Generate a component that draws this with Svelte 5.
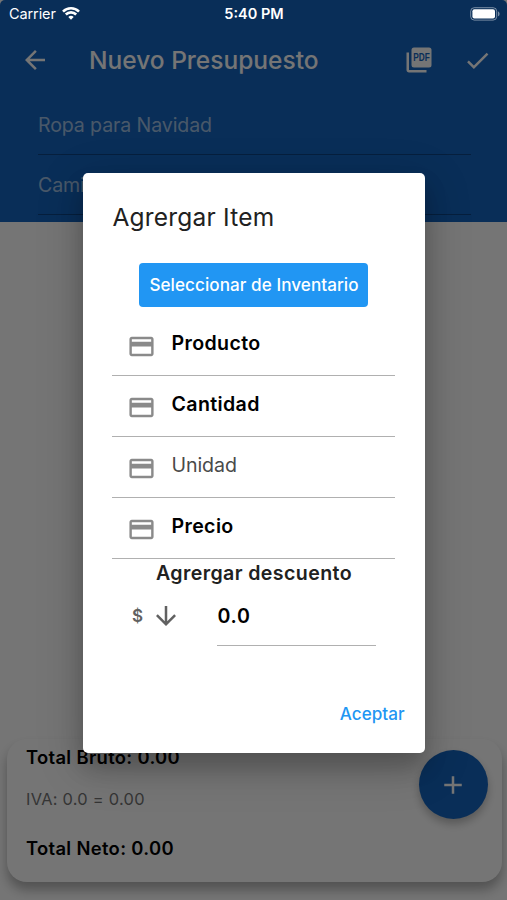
<script>
  let fields = [
    { label: 'Producto', required: true },
    { label: 'Cantidad', required: true },
    { label: 'Unidad', required: false },
    { label: 'Precio', required: true }
  ];
  let discount = '0.0';
</script>

<div class="screen">
  <div class="page">
    <header>
      <div class="toolbar">
        <svg class="back" viewBox="0 0 24 24"><path d="M20 11H7.83l5.59-5.59L12 4l-8 8 8 8 1.41-1.41L7.83 13H20v-2z" /></svg>
        <h1>Nuevo Presupuesto</h1>
        <svg class="pdf" viewBox="0 0 24 24">
          <path d="M4 6H2v14c0 1.1.9 2 2 2h14v-2H4z" />
          <rect x="6" y="2" width="16" height="16" rx="2" />
          <text x="7.4" y="12.6" textLength="13.2" lengthAdjust="spacingAndGlyphs">PDF</text>
        </svg>
        <svg class="check" viewBox="0 0 24 24"><path d="M9 16.17L4.83 12l-1.42 1.41L9 19 21 7l-1.41-1.41z" /></svg>
      </div>
      <div class="line">Ropa para Navidad</div>
      <div class="line">Camisas</div>
    </header>

    <section class="totals">
      <div class="sums">
        <b class="gross">Total Bruto: 0.00</b>
        <span class="tax">IVA: 0.0 = 0.00</span>
        <b class="net">Total Neto: 0.00</b>
      </div>
      <button class="fab" aria-label="Agregar">
        <svg viewBox="0 0 24 24"><path d="M19 13h-6v6h-2v-6H5v-2h6V5h2v6h6v2z" /></svg>
      </button>
    </section>
  </div>

  <div class="backdrop">
    <div class="dialog">
      <h2>Agrergar Item</h2>
      <button class="inventory">Seleccionar de Inventario</button>
      {#each fields as field}
        <div class="field">
          <svg viewBox="0 0 24 24"><path d="M20 4H4c-1.11 0-1.99.89-1.99 2L2 18c0 1.11.89 2 2 2h16c1.11 0 2-.89 2-2V6c0-1.11-.89-2-2-2zm0 14H4v-6h16v6zm0-10H4V6h16v2z" /></svg>
          <span class:required={field.required}>{field.label}</span>
        </div>
      {/each}
      <h3>Agrergar descuento</h3>
      <div class="discount">
        <span class="currency">$</span>
        <svg viewBox="0 0 24 24"><path d="M20 12l-1.41-1.41L13 16.17V4h-2v12.17l-5.58-5.59L4 12l8 8 8-8z" /></svg>
        <div class="amount">{discount}</div>
      </div>
      <button class="accept">Aceptar</button>
    </div>
  </div>

  <div class="status">
    <div class="carrier">
      <span>Carrier</span>
      <svg viewBox="0 0 18 13">
        <path d="M9 12.8 6.3 10a3.9 3.9 0 0 1 5.4 0z" />
        <path class="arc" d="M3.8 7.5a7.4 7.4 0 0 1 10.4 0M1 4.6a11.4 11.4 0 0 1 16 0" />
      </svg>
    </div>
    <div class="time">5:40 PM</div>
    <svg class="battery" viewBox="0 0 30 14">
      <rect class="outline" x=".7" y=".7" width="26" height="12.4" rx="3.6" />
      <rect x="2.4" y="2.2" width="22.6" height="9.4" rx="2" />
      <path class="tip" d="M28 4.6c2.1.7 2.1 3.9 0 4.6z" />
    </svg>
  </div>
</div>

<style>
  :global(body) {
    margin: 0;
    overflow: hidden;
  }

  .screen {
    position: relative;
    width: 507px;
    height: 900px;
    overflow: hidden;
    font-family: Inter, 'Liberation Sans', sans-serif;
  }

  h1, h2, h3 {
    margin: 0;
  }

  button {
    padding: 0;
    border: 0;
    font-family: inherit;
  }

  svg {
    display: block;
    flex: none;
    fill: currentColor;
  }

  .page {
    display: flex;
    flex-direction: column;
    justify-content: space-between;
    height: 900px;
    background: #fff;
  }

  header {
    box-sizing: border-box;
    height: 222px;
    padding-top: 25px;
    border-radius: 5px 5px 0 0;
    background: #1565c0;
    color: #fff;
  }

  .toolbar {
    display: flex;
    align-items: center;
    height: 70px;
    padding: 0 15px 0 20px;
  }

  .back {
    width: 30px;
    height: 30px;
  }

  h1 {
    flex: 1;
    margin-left: 39px;
    font-size: 24.5px;
    font-weight: 500;
    line-height: 30px;
    white-space: nowrap;
  }

  .pdf {
    width: 30px;
    height: 30px;
    margin-right: 29px;
  }

  .pdf text {
    fill: #1565c0;
    font-family: 'Liberation Sans', sans-serif;
    font-size: 8px;
    font-weight: 700;
  }

  .check {
    width: 29px;
    height: 29px;
  }

  .line {
    box-sizing: border-box;
    width: 433px;
    height: 60px;
    margin-left: 38px;
    border-bottom: 1px solid #0f4585;
    color: rgba(255, 255, 255, 0.6);
    font-size: 19.6px;
    letter-spacing: -0.13px;
    line-height: 60px;
  }

  .totals {
    display: flex;
    justify-content: space-between;
    box-sizing: border-box;
    width: 495px;
    height: 143px;
    margin: 0 0 18px 7px;
    padding: 7px 14.5px 0 19px;
    border-radius: 20px;
    background: #fff;
    box-shadow: 0 8px 12px rgba(0, 0, 0, 0.3);
  }

  .sums {
    display: flex;
    flex-direction: column;
    white-space: nowrap;
  }

  .gross, .net {
    font-size: 18.4px;
    font-weight: 600;
    letter-spacing: 0.33px;
    line-height: 22px;
  }

  .tax {
    margin: 20px 0;
    color: #757575;
    font-size: 16.4px;
    letter-spacing: 0.27px;
    line-height: 22px;
  }

  .net {
    margin-top: 7px;
  }

  .fab {
    display: flex;
    align-items: center;
    justify-content: center;
    width: 69px;
    height: 69px;
    margin-top: 4px;
    border-radius: 50%;
    background: #1565c0;
    box-shadow: 0 5px 8px rgba(0, 0, 0, 0.25);
    color: #fff;
  }

  .fab svg {
    width: 30px;
    height: 30px;
  }

  .backdrop {
    position: absolute;
    inset: 0;
    display: flex;
    align-items: flex-start;
    justify-content: center;
    padding-top: 173px;
    background: rgba(0, 0, 0, 0.54);
  }

  .dialog {
    display: flex;
    flex-direction: column;
    box-sizing: border-box;
    width: 342px;
    height: 580px;
    padding: 29px 29.5px 0 29.5px;
    border-radius: 5px;
    background: #fff;
    box-shadow: 0 14px 22px rgba(0, 0, 0, 0.2), 0 12px 46px 4px rgba(0, 0, 0, 0.16);
  }

  h2 {
    height: 61px;
    margin-left: 0.5px;
    color: #212121;
    font-size: 24.5px;
    font-weight: 400;
    letter-spacing: 0.2px;
    line-height: 30px;
    white-space: nowrap;
  }

  .inventory {
    align-self: center;
    width: 229px;
    height: 44px;
    margin-bottom: 8px;
    padding: 0 0 1px 1px;
    border-radius: 4px;
    background: #2196f3;
    color: #fff;
    font-size: 17.1px;
    font-weight: 500;
    letter-spacing: 0.06px;
    white-space: nowrap;
  }

  .field {
    display: flex;
    align-items: center;
    box-sizing: border-box;
    height: 61px;
    padding-left: 14.5px;
    border-bottom: 1px solid #b0b0b0;
    color: #8a8a8a;
  }

  .field svg {
    width: 29px;
    height: 29px;
    margin-top: 2px;
  }

  .field span {
    margin: -4px 0 0 16px;
    color: #4a4a4a;
    font-size: 19.6px;
    letter-spacing: -0.1px;
  }

  .field .required {
    color: #000;
    font-weight: 600;
    letter-spacing: 0.35px;
  }

  h3 {
    margin: 2px 0 0 1px;
    color: #212121;
    font-size: 19.6px;
    font-weight: 600;
    letter-spacing: 0.4px;
    line-height: 24px;
    text-align: center;
    white-space: nowrap;
  }

  .discount {
    display: flex;
    align-items: center;
    height: 61px;
    padding-left: 20px;
    color: #616161;
  }

  .currency {
    width: 18.5px;
    font-size: 17px;
    font-weight: 600;
  }

  .discount svg {
    width: 30px;
    height: 30px;
  }

  .amount {
    box-sizing: border-box;
    width: 159px;
    height: 61px;
    margin-left: 36px;
    padding-left: 1px;
    border-bottom: 1px solid #b0b0b0;
    color: #000;
    font-size: 19.6px;
    font-weight: 600;
    letter-spacing: 0.7px;
    line-height: 62px;
  }

  .accept {
    align-self: flex-end;
    margin: 57px -9.5px 0 0;
    background: none;
    color: #2196f3;
    font-size: 17.1px;
    font-weight: 500;
    line-height: 22px;
  }

  .status {
    position: absolute;
    top: 0;
    left: 0;
    display: grid;
    grid-template-columns: 1fr auto 1fr;
    align-items: center;
    box-sizing: border-box;
    width: 507px;
    height: 27px;
    padding: 0 7px 0 9px;
    color: #fff;
    font-size: 14.5px;
  }

  .carrier {
    display: flex;
    gap: 6px;
    align-items: center;
    letter-spacing: -0.1px;
  }

  .carrier svg {
    width: 18px;
    height: 13px;
  }

  .arc {
    fill: none;
    stroke: currentColor;
    stroke-width: 2.6;
  }

  .time {
    margin-right: 1px;
    font-weight: 600;
  }

  .battery {
    justify-self: end;
    width: 30px;
    height: 14px;
  }

  .outline {
    fill: none;
    stroke: rgba(255, 255, 255, 0.45);
  }

  .tip {
    fill: rgba(255, 255, 255, 0.45);
  }
</style>
